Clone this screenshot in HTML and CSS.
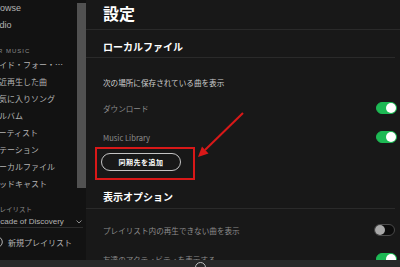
FILE: index.html
```html
<!DOCTYPE html>
<html lang="ja">
<head>
  <meta charset="UTF-8" />
  <title>設定</title>
  <link rel="stylesheet" href="styles.css">
</head>
<body>
  <div class="app">
    <div class="top">
      <aside class="side">
        <div class="nav">
          <div class="item en browse">Browse</div>
          <div class="item en radio">Radio</div>
          <div class="label music">YOUR MUSIC</div>
          <div class="item">メイド・フォー・ユー</div>
          <div class="item">最近再生した曲</div>
          <div class="item">お気に入りソング</div>
          <div class="item">アルバム</div>
          <div class="item">アーティスト</div>
          <div class="item">ステーション</div>
          <div class="item">ローカルファイル</div>
          <div class="item">ポッドキャスト</div>
          <div class="label pl">プレイリスト</div>
          <div class="pl-row">
            <span>Decade of Discovery</span>
            <svg class="chev" width="6" height="4" viewBox="0 0 6 4"><path d="M0.5 0.5 L3 3 L5.5 0.5" fill="none" stroke="#9a9a9a" stroke-width="0.9"/></svg>
          </div>
          <div class="new">
            <svg width="12" height="12" viewBox="0 0 12 12"><circle cx="6" cy="6" r="5.3" fill="none" stroke="#b3b3b3" stroke-width="1"/><path d="M6 3 V9 M3 6 H9" stroke="#b3b3b3" stroke-width="1"/></svg>
            <span>新規プレイリスト</span>
          </div>
        </div>
        <div class="thumb"></div>
      </aside>

      <main class="main">
        <h1 class="title">設定</h1>
        <section>
          <h2 class="sec-head">ローカルファイル</h2>
          <p class="desc">次の場所に保存されている曲を表示</p>
          <div class="row r-dl"><span>ダウンロード</span><span class="toggle on"></span></div>
          <div class="row r-lib"><span>Music Library</span><span class="toggle on"></span></div>
          <button class="add">同期先を追加</button>
        </section>
        <section>
          <h2 class="sec-head opt">表示オプション</h2>
          <div class="row r-pl"><span>プレイリスト内の再生できない曲を表示</span><span class="toggle"></span></div>
          <div class="row r-fr"><span>友達のアクティビティを表示する</span><span class="toggle on"></span></div>
        </section>
      </main>
    </div>
    <div class="player"><span class="play"></span></div>

    <svg class="marks" width="400" height="267" viewBox="0 0 400 267">
      <rect x="96" y="148" width="98" height="31" fill="none" stroke="#d81818" stroke-width="2"/>
      <line x1="243" y1="113" x2="205" y2="150" stroke="#d81818" stroke-width="2"/>
      <polygon points="198,157 208.5,153.5 202,146.5" fill="#d81818"/>
    </svg>
  </div>
</body>
</html>
```

FILE: styles.css
```css
html, body { margin: 0; padding: 0; overflow: hidden; background: #181818; font-family: "Noto Sans CJK JP", sans-serif; }
.app { position: relative; width: 400px; height: 267px; display: flex; flex-direction: column; }
.top { height: 260px; display: flex; overflow: hidden; }

/* sidebar */
.side { width: 86px; flex: none; background: #121212; position: relative; overflow: hidden; }
.nav { margin-left: -9px; font-size: 8px; color: #b3b3b3; }
.item { height: 17px; line-height: 17px; width: 74px; white-space: nowrap; overflow: hidden; text-overflow: ellipsis; }
.item.en { font-family: "Liberation Sans", sans-serif; font-size: 9px; }
.item.radio { margin-left: -3px; }
.label { height: 10px; line-height: 10px; margin-top: 12px; color: #8a8a8a; white-space: nowrap; }
.label.music { font-family: "Liberation Sans", sans-serif; font-size: 6px; letter-spacing: 1px; margin-left: -9px; }
.label.pl { font-size: 6.5px; margin-left: 2px; }
.pl-row { width: 93px; margin-left: -1px; padding: 2px 1px 0 0; box-sizing: border-box; height: 14px; line-height: 11px; display: flex; justify-content: space-between; align-items: center; border-bottom: 1px solid #2c2c2c; font-family: "Liberation Sans", sans-serif; font-size: 8px; white-space: nowrap; }
.chev { flex: none; }
.new { margin-top: 7px; height: 14px; display: flex; align-items: center; gap: 5px; white-space: nowrap; }
.new svg { flex: none; }
.thumb { position: absolute; left: 77px; top: 3px; width: 9px; height: 185px; background: #515151; }

/* main panel */
.main { flex: 1; overflow: hidden; color: #fff; }
.title { margin: 0; height: 29px; line-height: 26px; padding-left: 17px; font-size: 16px; font-weight: bold; border-bottom: 1px solid #2a2a2a; }
.sec-head { margin: 0 5px 0 0; padding: 10px 0 3px 17px; line-height: 14px; font-size: 10px; font-weight: bold; border-bottom: 1px solid #2a2a2a; }
.sec-head.opt { margin-top: 9px; padding-bottom: 4px; }
.desc { margin: 14px 0 0; padding-left: 17px; line-height: 22px; font-size: 7.6px; color: #cfcfcf; }
.row { display: flex; justify-content: space-between; align-items: center; padding: 0 3px 0 17px; font-size: 7.6px; color: #8c8c8c; white-space: nowrap; }
.r-dl { height: 28px; }
.r-lib { height: 30px; }
.r-pl { height: 28px; margin-top: 7px; }
.r-fr { height: 30px; }
.toggle { flex: none; width: 21px; height: 12px; border-radius: 6px; box-sizing: border-box; background: #0c0c0c; border: 1px solid #4a4a4a; display: flex; align-items: center; padding: 0 1px; }
.toggle::after { content: ""; width: 10px; height: 10px; border-radius: 50%; background: #a8a8a8; margin-left: -1px; }
.toggle.on { background: #1db954; border-color: #1db954; justify-content: flex-end; }
.toggle.on::after { background: #fff; margin: 0 -1px 0 0; }
.r-pl .toggle { margin-right: 2px; }
.add { display: block; margin: 1px 0 0 15px; width: 80px; height: 18px; border: 1px solid #c4c4c4; border-radius: 9px; background: transparent; color: #fff; font-family: "Noto Sans CJK JP", sans-serif; font-size: 7px; font-weight: bold; letter-spacing: 0.5px; padding: 0; }

/* player bar */
.player { height: 7px; background: #282828; display: flex; justify-content: center; overflow: hidden; }
.play { width: 9px; height: 9px; margin-top: 2px; border-radius: 50%; border: 1px solid #bdbdbd; }

.marks { position: absolute; left: 0; top: 0; pointer-events: none; }
```
